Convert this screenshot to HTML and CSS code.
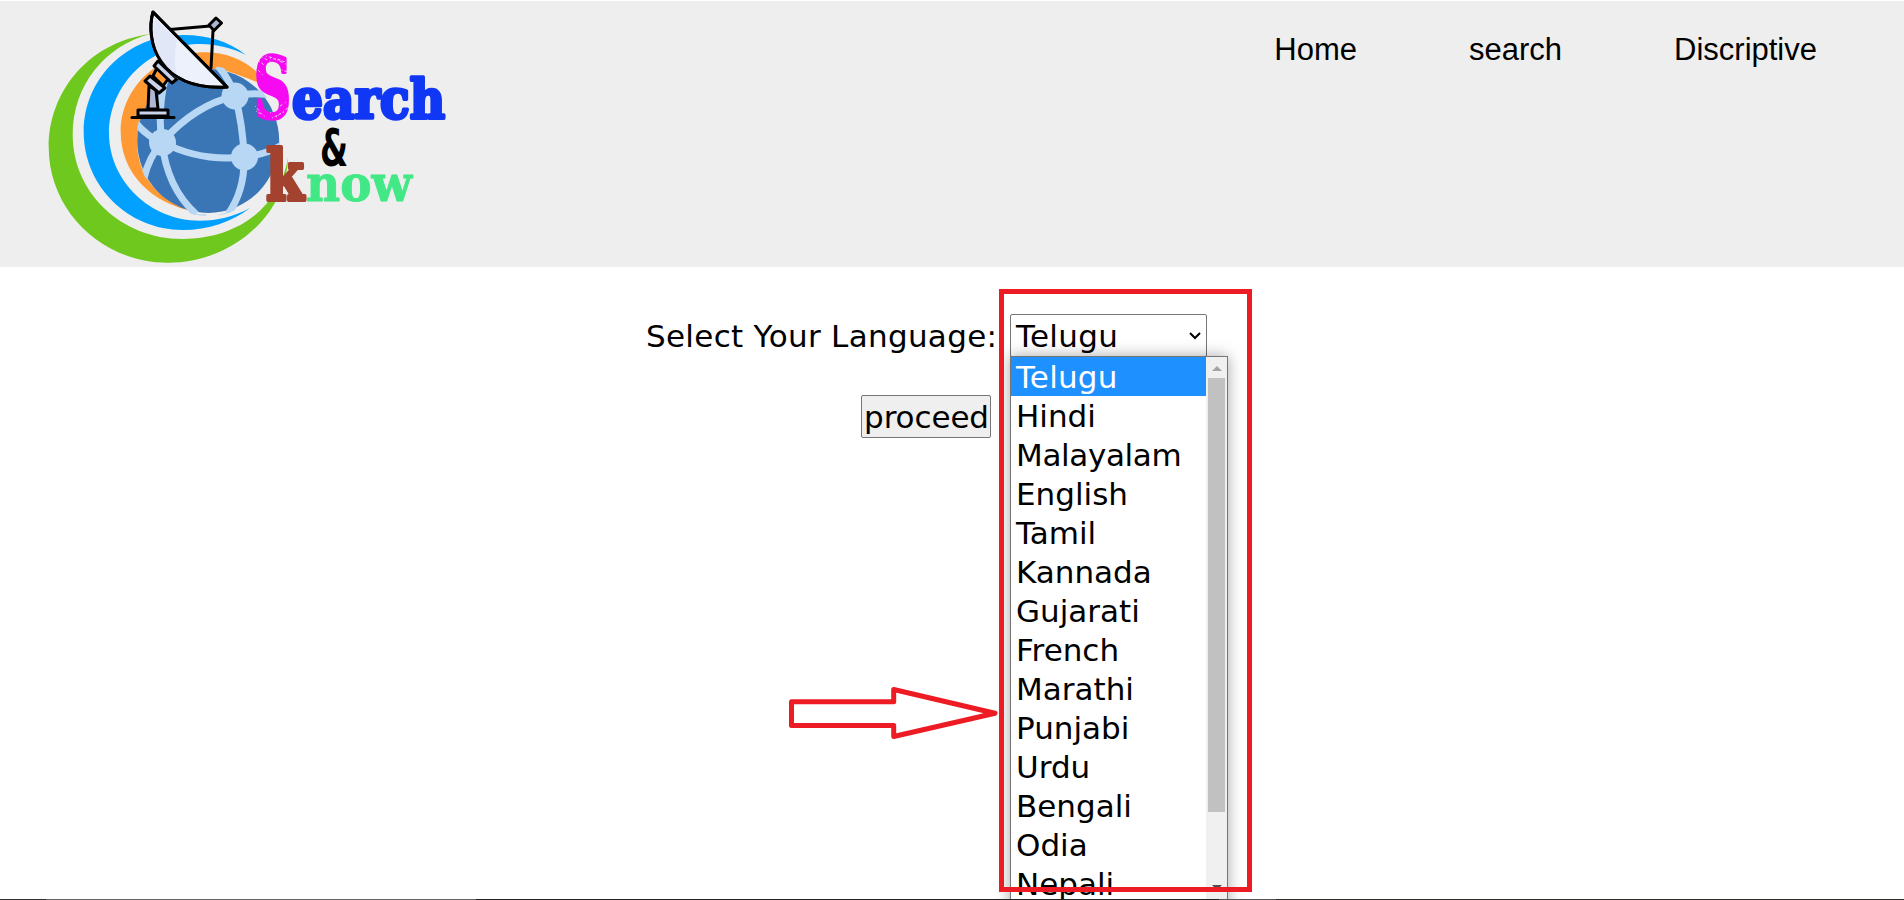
FILE: index.html
```html
<!DOCTYPE html>
<html lang="en">
<head>
<meta charset="utf-8">
<title>Search &amp; know</title>
<link rel="stylesheet" href="styles.css">
</head>
<body>
<header class="header">
  <svg class="logo" viewBox="0 1 480 266" width="480" height="266" role="img" aria-label="Search &amp; know">
    <defs><clipPath id="globe"><ellipse cx="208.200" cy="141" rx="72" ry="75"/></clipPath></defs>
    <path fill="#6fc81e" d="M150 34C85 43 48.700 95 48.700 147C48.700 211 102 262.700 168 262.700C232 262.700 286 215 288 158C280 205 240 239 182 239C122 239 72.700 193 72.700 135C72.700 85 105 46 150 34Z"/>
    <path fill="#02a1ff" d="M246 55C228 41 208 35 183 35C128 35 83.700 78 83.700 132C83.700 186 128 230 183 230C208 230 232 222 250 208C233 217 217 220.700 200 220.700C150 220.700 109 181 109 133C109 85 150 44 200 44C217 44 232 48 246 55Z"/>
    <path fill="#ff9933" d="M197 212C150 204 120.700 172 120.700 132C120.700 88 158 52.300 205 52.300C228 52.300 250 62 262 78C268 92 240 71 215 69C170 70 137 105 137 142C137 180 165 205 197 212Z"/>
    <ellipse cx="208.200" cy="141" rx="71" ry="72" fill="#3a75b5"/>
    <g clip-path="url(#globe)" fill="none" stroke="#b7d7f4" stroke-width="7">
      <path d="M162 142Q195 105 235 96Q243 125 244 157Q200 162 162 142C165 170 175 195 196 214M162 142Q157 110 166 75M235 96Q230 80 218 66M235 96Q255 91 282 97M162 142Q147 137 135 122M162 142Q149 157 144 178M244 157Q265 155 282 145M244 157Q245 190 228 214"/>
      <path d="M190 215Q198 217 206 216M218 217L232 213" stroke-width="4"/>
      <g fill="#b7d7f4" stroke="none"><circle cx="235" cy="96" r="13.500"/><circle cx="162.500" cy="142.500" r="13.500"/><circle cx="244.500" cy="157" r="13.500"/></g>
    </g>
    <g stroke="#000" stroke-width="3" stroke-linejoin="round" stroke-linecap="round" fill="#c9d3ea">
      <path d="M149 86L148 109H158L156 90Z" fill="#b0b7d3"/>
      <path d="M138 110H168V116H138Z"/><path d="M132 117.500H174"/>
      <path d="M157 68L168 79L163 86L153 76Z" fill="#ff9933"/>
      <path d="M158 61L177 79L172 83L154 66Z"/>
      <path d="M150 76L165 88L159 93L145 81Z"/>
      <path d="M170 29.500L210 26M213 31L211 68" fill="none"/>
      <path d="M153 12C145 40 158 91 227 87Z" fill="#edf1fb"/>
      <path d="M155 18C150 40 157 66 178 79C174 65 174 52 177 40Z" fill="#e1e7f6" stroke="none"/>
      <path d="M153 12C145 40 158 91 227 87Z" fill="none"/>
      <path d="M209 25L216 18L221.500 23L214 30.500Z" fill="#b0b7d3"/>
    </g>
    <g class="wordmark">
      <text x="254" y="118" font-size="84" fill="#f60af2" stroke="#f60af2" stroke-width="3.500" textLength="37" lengthAdjust="spacingAndGlyphs">S</text>
      <text x="292" y="117.500" font-size="54" fill="#1037f4" stroke="#1037f4" stroke-width="3.500" textLength="153" lengthAdjust="spacingAndGlyphs">earch</text>
      <text class="ampersand" x="320" y="166" font-size="51" textLength="28" lengthAdjust="spacingAndGlyphs">&amp;</text>
      <text x="266" y="200" font-size="69" fill="#a3422e" stroke="#a3422e" stroke-width="4" textLength="38" lengthAdjust="spacingAndGlyphs">k</text>
      <text x="306" y="201" font-size="50" fill="#43e886" stroke="#43e886" textLength="106" lengthAdjust="spacingAndGlyphs">now</text>
    </g>
    <g fill="none" stroke="#eee" stroke-width=".8" stroke-dasharray="1 2 3 3">
      <path d="M262 57L276 65M259 61L272 71M277 60L288 65M273 67L288 72M256 111L266 117M270 113L286 102M276 117L289 107M256 68L263 75M266 56L281 60M270 58L286 62M255 106L262 114M272 118L284 112"/>
    </g>
  </svg>
  <nav class="nav"><a>Home</a><a>search</a><a>Discriptive</a></nav>
</header>
<main class="main">
  <div class="row">
    <label class="label">Select Your Language:</label>
    <div class="select">
      <span class="value">Telugu</span>
      <svg class="chevron" viewBox="0 0 12 8" width="12" height="8"><path d="M1 1L6 6L11 1" fill="none" stroke="#000" stroke-width="2"/></svg>
      <div class="menu">
        <ul class="options"><li class="active">Telugu</li><li>Hindi</li><li class="long">Malayalam</li><li>English</li><li>Tamil</li><li>Kannada</li><li>Gujarati</li><li>French</li><li>Marathi</li><li>Punjabi</li><li>Urdu</li><li>Bengali</li><li>Odia</li><li>Nepali</li></ul>
        <div class="scrollbar"><i class="up"></i><i class="thumb"></i><i class="down"></i></div>
      </div>
    </div>
  </div>
  <button class="proceed">proceed</button>
  <svg class="arrow" viewBox="0 0 212 56" width="212" height="56"><path d="M4.500 16.700H106.700V4.500L208 28.300L106.700 51.500V40.400H4.500Z" fill="none" stroke="#ed1c24" stroke-width="5" stroke-linejoin="round"/></svg>
  <div class="frame"></div>
</main>
<footer class="edge"></footer>
</body>
</html>
```
FILE: styles.css
```css
* { box-sizing: border-box; }
body {
  margin: 0;
  height: 900px;
  overflow: hidden;
  display: flex;
  flex-direction: column;
  background: #fff;
  color: #000;
  font: 31px/39px "DejaVu Sans", sans-serif;
}
.header {
  flex: none;
  height: 266px;
  margin-top: 1px;
  display: flex;
  justify-content: space-between;
  align-items: flex-start;
  background: #eee;
}
.wordmark { font-family: "DejaVu Serif", serif; font-weight: bold; stroke-linejoin: round; }
.ampersand { font-family: "DejaVu Sans", sans-serif; }
.nav {
  display: flex;
  gap: 112px;
  padding: 29px 87px 0 0;
  font: 31px/39px "Liberation Sans", sans-serif;
}
.main { position: relative; flex: 1; min-height: 0; overflow: hidden; padding-top: 47px; }
.row { display: flex; padding-left: 646px; }
.label { width: 364px; padding-top: 3px; white-space: nowrap; letter-spacing: .3px; }
.select {
  position: relative;
  width: 197px;
  height: 43px;
  display: flex;
  justify-content: space-between;
  align-items: center;
  padding: 0 5px;
  border: 1px solid #767676;
  border-radius: 2px;
}
.value { padding-top: 1px; letter-spacing: .3px; }
.menu {
  position: absolute;
  z-index: 1;
  top: 41px;
  left: -1px;
  width: 218px;
  height: 560px;
  display: flex;
  background: #fff;
  border: 1px solid #767676;
  box-shadow: 0 0 14px rgba(0, 0, 0, .35);
}
.options { list-style: none; margin: 0; padding: 0; width: 195px; }
.options li { height: 39px; padding: 1px 0 0 5px; }
.options .active { background: #1e90ff; color: #fff; letter-spacing: .2px; }
.options .long { letter-spacing: -.35px; }
.scrollbar {
  flex: 1;
  display: flex;
  flex-direction: column;
  align-items: center;
  padding-top: 9px;
  background: #f0f0f0;
}
.up, .down { border: 5px solid transparent; border-top: 0; border-bottom: 5px solid #a3a3a3; }
.down { border-bottom: 0; border-top: 5px solid #505050; margin-top: 73px; }
.thumb { width: 17px; height: 434px; margin-top: 7px; background: #c1c1c1; }
.proceed {
  display: block;
  width: 130px;
  height: 43px;
  margin: 38px 0 0 861px;
  padding: 1px 0 0 1px;
  border: 1px solid #767676;
  border-radius: 2px;
  background: #efefef;
  color: #000;
  font: inherit;
  letter-spacing: -.1px;
}
.arrow { position: absolute; left: 787px; top: 418px; }
.frame {
  position: absolute;
  z-index: 2;
  left: 999px;
  top: 22px;
  width: 253px;
  height: 603px;
  border: 5px solid #ed1c24;
}
.edge { flex: none; height: 1px; background: linear-gradient(90deg, #333 0 2.4%, #666 2.4% 25%, #222 25% 64%, #555 64% 67%, #302c2c 67%); }
```
